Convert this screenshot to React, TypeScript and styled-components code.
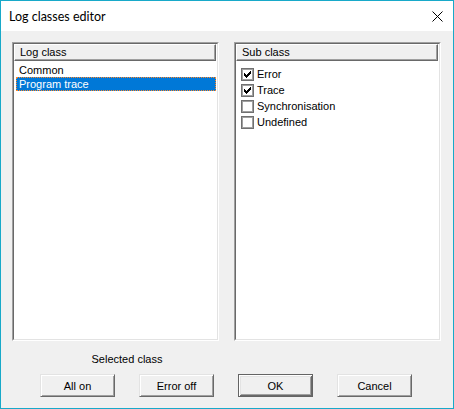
import React from 'react';
import styled, { createGlobalStyle } from 'styled-components';

const Global = createGlobalStyle`
  html, body { margin: 0; padding: 0; background: #ffffff; }
  * { box-sizing: border-box; }
`;

const Window = styled.div`
  width: 454px;
  height: 409px;
  border: 1px solid #18a9c9;
  background: #f0f0f0;
  display: flex;
  flex-direction: column;
  font-family: "Liberation Sans", Arial, sans-serif;
  font-size: 11px;
  color: #000;
`;

const TitleBar = styled.div`
  height: 30px;
  flex: none;
  background: #ffffff;
  display: flex;
  align-items: center;
  justify-content: space-between;
  padding: 0 10px 0 8px;
`;

const Title = styled.span`
  font-family: Lato, "Noto Sans", sans-serif;
  font-size: 12.5px;
  color: #000;
`;

const CloseIcon = styled.svg`
  display: block;
`;

const Body = styled.div`
  flex: 1;
  display: flex;
  flex-direction: column;
  padding: 11px 11px 0 11px;
`;

const Panels = styled.div`
  display: flex;
  gap: 15px;
  height: 299px;
`;

const PanelOuter = styled.div`
  width: 207px;
  height: 100%;
  border: 1px solid;
  border-color: #a0a0a0 #ffffff #ffffff #a0a0a0;
`;

const PanelInner = styled.div`
  height: 100%;
  border: 1px solid;
  border-color: #696969 #e3e3e3 #e3e3e3 #696969;
  background: #ffffff;
  display: flex;
  flex-direction: column;
`;

const Header = styled.div`
  height: 17px;
  flex: none;
  background: #f0f0f0;
  border: 1px solid;
  border-color: #ffffff #696969 #696969 #ffffff;
  box-shadow: inset -1px -1px #a0a0a0;
  padding-left: 5px;
  line-height: 14px;
  margin-right: 1px;
`;

const ClassList = styled.div`
  padding: 2px 1px 0 2px;
  display: flex;
  flex-direction: column;
`;

const ClassRow = styled.div<{ $selected?: boolean }>`
  height: 14px;
  line-height: 12px;
  padding-left: 2px;
  border: 1px ${(p) => (p.$selected ? 'dotted #ff8728' : 'solid transparent')};
  background: ${(p) => (p.$selected ? '#0078d7' : 'transparent')};
  color: ${(p) => (p.$selected ? '#ffffff' : '#000000')};
  white-space: nowrap;
`;

const SubList = styled.div`
  padding: 5px 0 0 5px;
  display: flex;
  flex-direction: column;
`;

const SubRow = styled.div`
  height: 16px;
  display: flex;
  align-items: center;
  gap: 3px;
  white-space: nowrap;
`;

const Box = styled.div`
  width: 13px;
  height: 13px;
  flex: none;
  border: 1px solid #707070;
  box-shadow: inset 0 0 0 1px #a0a0a0;
  background: #ffffff;
  display: flex;
  align-items: center;
  justify-content: center;
`;

const Footer = styled.div`
  display: grid;
  grid-template-columns: repeat(4, 75px);
  column-gap: 24px;
  row-gap: 8px;
  padding-left: 28px;
  margin-top: 12px;
`;

const Label = styled.div`
  grid-column: 1 / span 2;
  text-align: center;
  line-height: 13px;
  height: 13px;
`;

const Button = styled.button<{ $default?: boolean }>`
  grid-row: 2;
  width: 75px;
  height: 23px;
  padding: 0;
  margin: 0;
  font-family: "Liberation Sans", Arial, sans-serif;
  font-size: 11px;
  color: #000;
  background: #f0f0f0;
  border: 1px solid;
  border-color: ${(p) =>
    p.$default ? '#646464' : '#e3e3e3 #696969 #696969 #e3e3e3'};
  box-shadow: ${(p) =>
    p.$default
      ? 'inset 1px 1px #ffffff, inset -1px -1px #696969, inset 2px 2px #e3e3e3, inset -2px -2px #a0a0a0'
      : 'inset 1px 1px #ffffff, inset -1px -1px #a0a0a0'};
  outline: none;
`;

const Check = () => (
  <svg width="7" height="7" viewBox="0 0 7 7" shapeRendering="crispEdges">
    <path
      d="M0 2 H1 V3 H2 V4 H3 V3 H4 V2 H5 V1 H6 V0 H7 V3 H6 V4 H5 V5 H4 V6 H3 V7 H2 V6 H1 V5 H0 Z"
      fill="#000"
    />
  </svg>
);

const subs = [
  { name: 'Error', checked: true },
  { name: 'Trace', checked: true },
  { name: 'Synchronisation', checked: false },
  { name: 'Undefined', checked: false },
];

export default function App() {
  return (
    <>
      <Global />
      <Window>
        <TitleBar>
          <Title>Log classes editor</Title>
          <CloseIcon width="11" height="11" viewBox="0 0 11 11">
            <path d="M0.5 0.5 L10.5 10.5 M10.5 0.5 L0.5 10.5" stroke="#000" strokeWidth="1" />
          </CloseIcon>
        </TitleBar>
        <Body>
          <Panels>
            <PanelOuter>
              <PanelInner>
                <Header>Log class</Header>
                <ClassList>
                  <ClassRow>Common</ClassRow>
                  <ClassRow $selected>Program trace</ClassRow>
                </ClassList>
              </PanelInner>
            </PanelOuter>
            <PanelOuter>
              <PanelInner>
                <Header>Sub class</Header>
                <SubList>
                  {subs.map((s) => (
                    <SubRow key={s.name}>
                      <Box>{s.checked && <Check />}</Box>
                      {s.name}
                    </SubRow>
                  ))}
                </SubList>
              </PanelInner>
            </PanelOuter>
          </Panels>
          <Footer>
            <Label>Selected class</Label>
            <Button>All on</Button>
            <Button>Error off</Button>
            <Button $default>OK</Button>
            <Button>Cancel</Button>
          </Footer>
        </Body>
      </Window>
    </>
  );
}
